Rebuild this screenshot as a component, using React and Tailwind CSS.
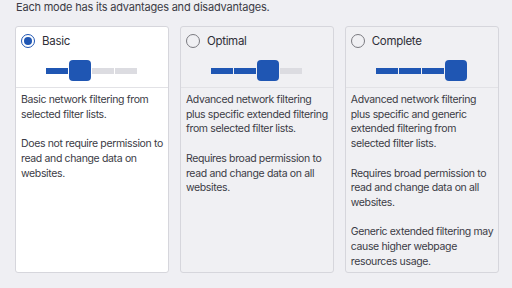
import React from "react";

const modes = [
  {
    name: "Basic",
    level: 1,
    checked: true,
    paras: [
      ["Basic network filtering from", "selected filter lists."],
      ["Does not require permission to", "read and change data on", "websites."],
    ],
  },
  {
    name: "Optimal",
    level: 2,
    checked: false,
    paras: [
      ["Advanced network filtering", "plus specific extended filtering", "from selected filter lists."],
      ["Requires broad permission to", "read and change data on all", "websites."],
    ],
  },
  {
    name: "Complete",
    level: 3,
    checked: false,
    paras: [
      ["Advanced network filtering", "plus specific and generic", "extended filtering from", "selected filter lists."],
      ["Requires broad permission to", "read and change data on all", "websites."],
      ["Generic extended filtering may", "cause higher webpage", "resources usage."],
    ],
  },
];

function Radio({ checked }) {
  if (checked) {
    return (
      <span className="flex h-[14px] w-[14px] shrink-0 items-center justify-center rounded-full border-[1.5px] border-[#1f56b3] bg-white">
        <span className="h-[8px] w-[8px] rounded-full bg-[#1f56b3]" />
      </span>
    );
  }
  return <span className="h-[14px] w-[14px] shrink-0 rounded-full border-[1.5px] border-[#7a7a80] bg-transparent" />;
}

function Slider({ level }) {
  return (
    <div className="flex items-center justify-center gap-[1px]">
      {[0, 1, 2, 3].map((i) =>
        i === level ? (
          <div key={i} className="h-[21px] w-[22px] rounded-[4px] bg-[#1f56b3]" />
        ) : (
          <div
            key={i}
            className={i < level ? "h-[6px] w-[22px] bg-[#1f56b3]" : "h-[6px] w-[22px] bg-[#dcdce1]"}
          />
        )
      )}
    </div>
  );
}

export default function App() {
  return (
    <div
      className="h-[288px] w-[512px] overflow-hidden bg-[#efeff3] px-[15px] text-[#3b3b45]"
      style={{ fontFamily: "Inter, 'Liberation Sans', sans-serif" }}
    >
      <div className="pl-[1px] text-[11px] leading-[14px] tracking-[-0.2px]">
        Each mode has its advantages and disadvantages.
      </div>
      <div className="mt-[12px] flex gap-[11px]">
        {modes.map((m) => (
          <div
            key={m.name}
            className={
              "flex h-[247px] w-[154px] flex-col rounded-[3px] border border-[#d6d6dc] " +
              (m.checked ? "bg-white" : "bg-[#f0f0f3]")
            }
          >
            <div className="flex items-center gap-[7px] px-[5px] pt-[6px]">
              <Radio checked={m.checked} />
              <span className="text-[11.5px] leading-[16px] tracking-[-0.3px] text-[#2f2f38]">{m.name}</span>
            </div>
            <div className="border-b border-[#e2e2e6] pt-[11px] pb-[6px]">
              <Slider level={m.level} />
            </div>
            <div className="flex flex-col gap-[14.7px] px-[5px] pt-[5px] text-[10.5px] leading-[14.7px] tracking-[-0.35px]">
              {m.paras.map((p, i) => (
                <p key={i}>
                  {p.map((line, j) => (
                    <span key={j} className="block whitespace-nowrap">
                      {line}
                    </span>
                  ))}
                </p>
              ))}
            </div>
          </div>
        ))}
      </div>
    </div>
  );
}
